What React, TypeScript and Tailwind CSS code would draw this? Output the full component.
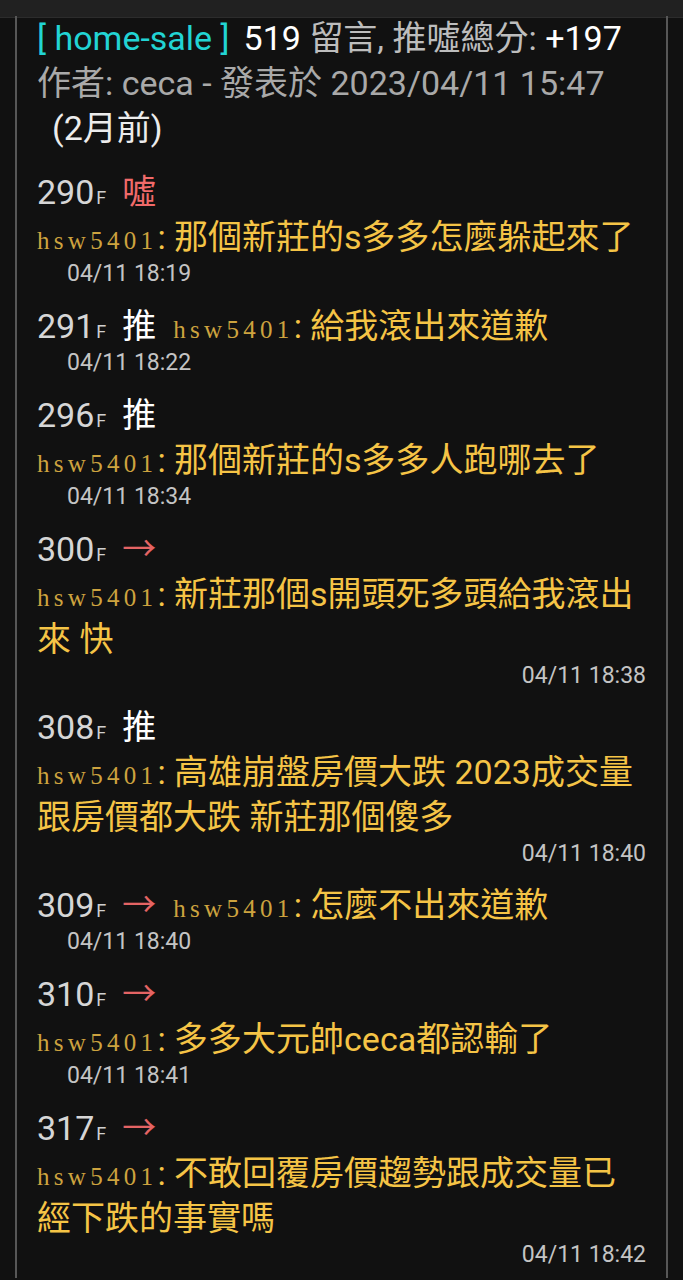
import React from "react";

type Comment = {
  floor: string;
  tag: "推" | "噓" | "→";
  content: string;
  time: string;
  inline?: boolean;
  timeRight?: boolean;
};

const comments: Comment[] = [
  { floor: "290", tag: "噓", content: "那個新莊的s多多怎麼躲起來了", time: "04/11 18:19" },
  { floor: "291", tag: "推", content: "給我滾出來道歉", time: "04/11 18:22", inline: true },
  { floor: "296", tag: "推", content: "那個新莊的s多多人跑哪去了", time: "04/11 18:34" },
  { floor: "300", tag: "→", content: "新莊那個s開頭死多頭給我滾出來 快", time: "04/11 18:38", timeRight: true },
  {
    floor: "308",
    tag: "推",
    content: "高雄崩盤房價大跌 2023成交量跟房價都大跌 新莊那個傻多",
    time: "04/11 18:40",
    timeRight: true,
  },
  { floor: "309", tag: "→", content: "怎麼不出來道歉", time: "04/11 18:40", inline: true },
  { floor: "310", tag: "→", content: "多多大元帥ceca都認輸了", time: "04/11 18:41" },
  {
    floor: "317",
    tag: "→",
    content: "不敢回覆房價趨勢跟成交量已經下跌的事實嗎",
    time: "04/11 18:42",
    timeRight: true,
  },
];

function tagClass(tag: Comment["tag"]) {
  if (tag === "推") return "text-white";
  if (tag === "噓") return "text-[#f06a6a]";
  return "text-[#e46464]";
}

function UserLine({ content }: { content: string }) {
  return (
    <>
      <span className="font-['Liberation_Serif',serif] text-[25px] leading-none tracking-[4.3px] text-[#cda33f]">
        hsw5401
      </span>
      <span className="text-[#f5c446]">: {content}</span>
    </>
  );
}

function CommentRow({ c }: { c: Comment }) {
  return (
    <div className="mb-[16px]">
      <div className="leading-[45px]">
        <span className="text-[#d6d6d6]">{c.floor}</span>
        <span className="ml-[2px] text-[18px] leading-none text-[#cfcfcf]">F</span>
        <span className={`ml-[16px] ${tagClass(c.tag)}`}>{c.tag}</span>
        {c.inline && (
          <>
            <span className="inline-block w-[17px] leading-none" />
            <UserLine content={c.content} />
          </>
        )}
      </div>
      {!c.inline && (
        <div className="leading-[45px]">
          <UserLine content={c.content} />
        </div>
      )}
      <div
        className={
          c.timeRight
            ? "text-right text-[23px] leading-[27px] text-[#c4c4c4]"
            : "pl-[30px] text-[23px] leading-[28px] text-[#c4c4c4]"
        }
      >
        {c.time}
      </div>
    </div>
  );
}

export default function App() {
  return (
    <div className="min-h-[1280px] overflow-hidden bg-[#111111] font-['Roboto','Noto_Sans_CJK_TC',sans-serif]">
      <div className="h-[18px] border-b border-[#2c2c2c] bg-[#212121]" />
      <div className="mx-[15px] min-h-[1262px] border-x-2 border-[#575757] pl-[20px] pr-[20px] text-[34px]">
        <div className="-mt-[2px] mb-[19px] leading-[45px]">
          <div>
            <span className="text-[#22d4d4]">[ home-sale ]</span>
            <span className="ml-[14px] text-white">519 </span>
            <span className="text-[#bdbdbd]">留言, 推噓總分: </span>
            <span className="text-white">+197</span>
          </div>
          <div className="text-[#a9a9a9]">作者: ceca - 發表於 2023/04/11 15:47</div>
          <div className="pl-[15px] text-[#ececec]">(2月前)</div>
        </div>
        {comments.map((c) => (
          <CommentRow key={c.floor} c={c} />
        ))}
      </div>
    </div>
  );
}
